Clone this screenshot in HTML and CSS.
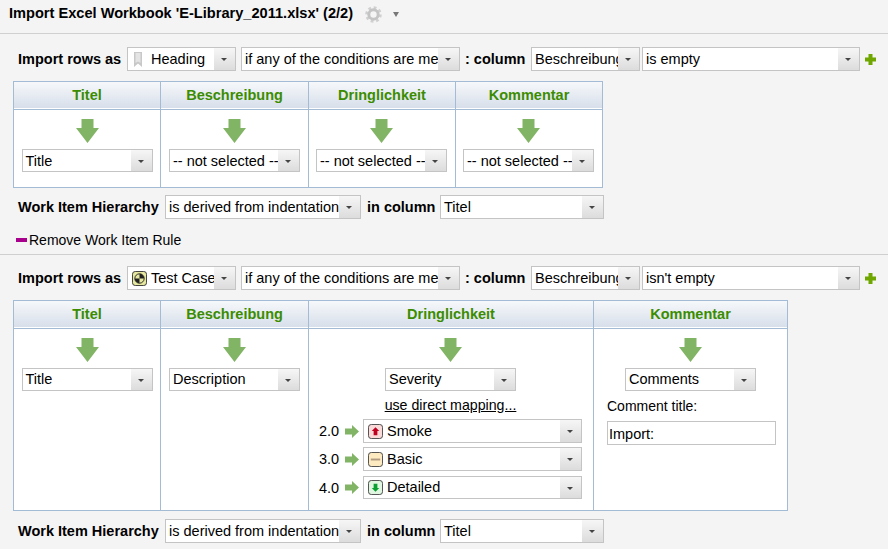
FILE: index.html

```html
<!DOCTYPE html>
<html lang="en">
<head>
   <meta charset="utf-8"/>
   <title>Import Excel Workbook</title>
   <link rel="stylesheet" href="styles.css">
</head>
<body>
<svg class="defs" width="0" height="0" aria-hidden="true">
   <symbol id="down" viewBox="0 0 23 24"><path d="M5.500 0h12v9H23L11.500 24 0 9h5.500z"/></symbol>
   <symbol id="right" viewBox="0 0 14 13"><path d="M0 3.500h7V0l7 6.500L7 13V9.500H0z"/></symbol>
</svg>

<!--title bar-->
<header class="title-bar">
   <h1>Import Excel Workbook 'E-Library_2011.xlsx' (2/2)</h1>
   <svg class="gear" viewBox="0 0 20 20">
      <circle cx="10" cy="10" r="8" fill="none" stroke="#d0d0d0" stroke-width="3.500" stroke-dasharray="3.200 3.080"/>
      <circle cx="10" cy="10" r="5.500" fill="none" stroke="#c4c4c4" stroke-width="3.500"/>
   </svg>
   <span class="menu-caret"></span>
</header>

<!--first rule-->
<section class="rule">
   <div class="import-row">
      <span class="label label-import">Import rows as</span>
      <div class="sel w-type">
         <span class="val val-icon">
            <svg class="ico-bookmark" viewBox="0 0 8 15"><path d="M0 0h8v15L4 11.500 0 15z" fill="#c8c8c8"/><path d="M1.500 1h5v10L4 9.500 1.500 11z" fill="#e4e4e4"/></svg>
            <span>Heading</span>
         </span>
         <span class="btn"></span>
      </div>
      <div class="sel w-cond"><span class="val">if any of the conditions are met</span><span class="btn"></span></div>
      <span class="label label-column">: column</span>
      <div class="sel w-col"><span class="val">Beschreibung</span><span class="btn"></span></div>
      <div class="sel w-test"><span class="val">is empty</span><span class="btn"></span></div>
      <svg class="plus" viewBox="0 0 11 11"><path d="M3.500 0h4v3.500H11v4H7.500V11h-4V7.500H0v-4h3.500z"/></svg>
   </div>

   <div class="map-table map-table-first">
      <div class="col c-a">
         <div class="col-head">Titel</div>
         <div class="col-body">
            <svg class="down"><use href="#down"/></svg>
            <div class="sel w-map"><span class="val">Title</span><span class="btn"></span></div>
         </div>
      </div>
      <div class="col c-b">
         <div class="col-head">Beschreibung</div>
         <div class="col-body">
            <svg class="down"><use href="#down"/></svg>
            <div class="sel w-map"><span class="val">-- not selected --</span><span class="btn"></span></div>
         </div>
      </div>
      <div class="col c-c">
         <div class="col-head">Dringlichkeit</div>
         <div class="col-body">
            <svg class="down"><use href="#down"/></svg>
            <div class="sel w-map"><span class="val">-- not selected --</span><span class="btn"></span></div>
         </div>
      </div>
      <div class="col c-c">
         <div class="col-head">Kommentar</div>
         <div class="col-body">
            <svg class="down"><use href="#down"/></svg>
            <div class="sel w-map"><span class="val">-- not selected --</span><span class="btn"></span></div>
         </div>
      </div>
   </div>

   <div class="hier-row">
      <span class="label label-hier">Work Item Hierarchy</span>
      <div class="sel w-hier"><span class="val">is derived from indentation</span><span class="btn"></span></div>
      <span class="label label-in">in column</span>
      <div class="sel w-title"><span class="val">Titel</span><span class="btn"></span></div>
   </div>

   <div class="remove"><span class="minus"></span>Remove Work Item Rule</div>
</section>

<!--second rule-->
<section class="rule rule-second">
   <div class="import-row">
      <span class="label label-import">Import rows as</span>
      <div class="sel w-type">
         <span class="val val-icon">
            <svg class="ico" viewBox="0 0 16 16">
               <rect x=".500" y=".500" width="15" height="15" rx="3" fill="#e6e8a0" stroke="#333"/>
               <circle cx="8" cy="8" r="5" fill="#e6e8a0" stroke="#222"/>
               <path d="M8 8V3a5 5 0 0 1 5 5zM8 8v5a5 5 0 0 1-5-5z" fill="#222"/>
            </svg>
            <span>Test Case</span>
         </span>
         <span class="btn"></span>
      </div>
      <div class="sel w-cond"><span class="val">if any of the conditions are met</span><span class="btn"></span></div>
      <span class="label label-column">: column</span>
      <div class="sel w-col"><span class="val">Beschreibung</span><span class="btn"></span></div>
      <div class="sel w-test"><span class="val">isn't empty</span><span class="btn"></span></div>
      <svg class="plus" viewBox="0 0 11 11"><path d="M3.500 0h4v3.500H11v4H7.500V11h-4V7.500H0v-4h3.500z"/></svg>
   </div>

   <div class="map-table">
      <div class="col c-a">
         <div class="col-head">Titel</div>
         <div class="col-body">
            <svg class="down"><use href="#down"/></svg>
            <div class="sel w-map"><span class="val">Title</span><span class="btn"></span></div>
         </div>
      </div>
      <div class="col c-b">
         <div class="col-head">Beschreibung</div>
         <div class="col-body">
            <svg class="down"><use href="#down"/></svg>
            <div class="sel w-map"><span class="val">Description</span><span class="btn"></span></div>
         </div>
      </div>
      <div class="col c-wide">
         <div class="col-head">Dringlichkeit</div>
         <div class="col-body">
            <svg class="down"><use href="#down"/></svg>
            <div class="sel w-map"><span class="val">Severity</span><span class="btn"></span></div>
            <a class="direct" href="#">use direct mapping...</a>
            <div class="value-map">
               <div class="value-row">
                  <span class="num">2.0</span>
                  <svg class="right"><use href="#right"/></svg>
                  <div class="sel w-value">
                     <span class="val val-icon">
                        <svg class="ico" viewBox="0 0 16 16">
                           <rect x=".500" y=".500" width="15" height="15" rx="3" fill="#fbdada" stroke="#444"/>
                           <path d="M8 3.500l4 4H10V12H6V7.500H4z" fill="#c00020"/>
                        </svg>
                        <span>Smoke</span>
                     </span>
                     <span class="btn"></span>
                  </div>
               </div>
               <div class="value-row">
                  <span class="num">3.0</span>
                  <svg class="right"><use href="#right"/></svg>
                  <div class="sel w-value">
                     <span class="val val-icon">
                        <svg class="ico" viewBox="0 0 16 16">
                           <rect x=".500" y=".500" width="15" height="15" rx="3" fill="#fdeac0" stroke="#444"/>
                           <rect x="3" y="7" width="10" height="2" fill="#b09a80"/>
                        </svg>
                        <span>Basic</span>
                     </span>
                     <span class="btn"></span>
                  </div>
               </div>
               <div class="value-row">
                  <span class="num">4.0</span>
                  <svg class="right"><use href="#right"/></svg>
                  <div class="sel w-value">
                     <span class="val val-icon">
                        <svg class="ico" viewBox="0 0 16 16">
                           <rect x=".500" y=".500" width="15" height="15" rx="3" fill="#e0f6e0" stroke="#444"/>
                           <path d="M6 4h4v4.500h2l-4 4-4-4h2z" fill="#08a030"/>
                        </svg>
                        <span>Detailed</span>
                     </span>
                     <span class="btn"></span>
                  </div>
               </div>
            </div>
         </div>
      </div>
      <div class="col c-last">
         <div class="col-head">Kommentar</div>
         <div class="col-body">
            <svg class="down"><use href="#down"/></svg>
            <div class="sel w-map"><span class="val">Comments</span><span class="btn"></span></div>
            <div class="comment-label">Comment title:</div>
            <div class="comment-input">Import:</div>
         </div>
      </div>
   </div>

   <div class="hier-row">
      <span class="label label-hier">Work Item Hierarchy</span>
      <div class="sel w-hier"><span class="val">is derived from indentation</span><span class="btn"></span></div>
      <span class="label label-in">in column</span>
      <div class="sel w-title"><span class="val">Titel</span><span class="btn"></span></div>
   </div>
</section>
</body>
</html>
```

FILE: styles.css

```css
/* page */
html, body {
   margin: 0;
   height: 549px;
   overflow: hidden;
}
body {
   background: #f4f4f4;
   color: #000;
   font-family: "Liberation Sans", Arial, sans-serif;
   font-size: 14.5px;
}
.defs {
   position: absolute;
}

/* title bar */
.title-bar {
   display: flex;
   align-items: center;
   box-sizing: border-box;
   height: 34px;
   padding: 0 0 7px 9px;
   border-bottom: 1px solid #d0d0d0;
}
.title-bar h1 {
   margin: 0;
   font-size: 14.6px;
   font-weight: bold;
}
.gear {
   width: 17px;
   height: 17px;
   margin-left: 12px;
   margin-top: 3px;
}
.menu-caret {
   width: 0;
   height: 0;
   margin-left: 11px;
   margin-top: 3px;
   border-left: 3px solid transparent;
   border-right: 3px solid transparent;
   border-top: 5px solid #777;
}

/* rule sections */
.rule {
   padding-top: 13px;
}
.rule-second {
   padding-top: 11px;
   border-top: 1px solid #cfcfcf;
}

.import-row,
.hier-row {
   display: flex;
   align-items: center;
   padding-left: 18px;
}
.label {
   font-weight: bold;
   font-size: 14.5px;
   white-space: nowrap;
}
.label-import { width: 109px; }
.label-column { width: 66px; margin-left: 5px; }
.label-hier { width: 147px; }
.label-in { width: 73px; margin-left: 6px; }

/* select boxes */
.sel {
   display: flex;
   box-sizing: border-box;
   height: 24px;
   background: #fff;
   border: 1px solid #c4c4c4;
   flex: none;
}
.val {
   flex: 1;
   min-width: 0;
   overflow: hidden;
   white-space: nowrap;
   padding-left: 3px;
   line-height: 22px;
}
.val-icon {
   display: flex;
   align-items: center;
   gap: 4px;
}
.btn {
   position: relative;
   flex: none;
   width: 21px;
   background: linear-gradient(#f6f6f6, #dcdcdc);
}
.btn::after {
   content: "";
   position: absolute;
   left: 7px;
   top: 10px;
   border-left: 3.500px solid transparent;
   border-right: 3.500px solid transparent;
   border-top: 3.500px solid #444;
}
.w-type { width: 109px; margin-right: 5px; }
.w-cond { width: 219px; }
.w-col { width: 109px; margin-right: 2px; }
.w-test { width: 218px; }
.w-map { width: 131px; height: 23px; }
.w-hier { width: 196px; }
.w-title { width: 164px; }
.w-value { width: 219px; }
.w-map .val { line-height: 21px; }
.map-table-first .w-map .val { line-height: 23px; }

.plus {
   width: 11px;
   height: 11px;
   margin-left: 5px;
   fill: #6fa600;
}
.ico {
   flex: none;
   width: 15px;
   height: 15px;
   margin-left: 1px;
}
.ico-bookmark {
   flex: none;
   width: 8px;
   height: 15px;
   margin-left: 3px;
   margin-right: 5px;
}

/* mapping table */
.map-table {
   display: flex;
   width: max-content;
   margin: 10px 0 0 13px;
   background: #fff;
   border: 1px solid #a3bbd5;
}
.col {
   box-sizing: border-box;
   border-left: 1px solid #a3bbd5;
}
.c-a { width: 146px; border-left: 0; }
.c-b { width: 148px; }
.c-c { width: 147px; }
.c-wide { width: 285px; }
.c-last { width: 194px; }
.col-head {
   height: 27px;
   line-height: 26px;
   border-bottom: 1px solid #a3bbd5;
   box-shadow: inset 0 -1px 0 #fff;
   background: linear-gradient(#f6f8fa, #d6deea);
   color: #3c8c00;
   font-weight: bold;
   text-align: center;
}
.col-body {
   display: flex;
   flex-direction: column;
   align-items: center;
   padding: 9px 0 15px;
}
.c-c .col-body,
.c-wide .col-body {
   padding-right: 1px;
}
.c-wide .col-body {
   padding-bottom: 11px;
}
.down {
   display: block;
   width: 23px;
   height: 24px;
   margin-bottom: 6px;
   fill: #82b466;
}

/* second table extras */
.direct {
   margin-top: 6px;
   color: #000;
   font-size: 14.2px;
   line-height: 16px;
}
.value-map {
   display: flex;
   flex-direction: column;
   gap: 4px;
   margin-top: 6px;
}
.value-row {
   display: flex;
   align-items: center;
}
.value-row:last-child {
   margin-top: 1px;
}
.value-row:last-child .sel {
   height: 23px;
}
.value-row:last-child .val {
   padding-bottom: 1px;
}
.num {
   width: 26px;
}
.right {
   width: 14px;
   height: 13px;
   margin-right: 4px;
   fill: #82b466;
}
.comment-label {
   align-self: flex-start;
   margin: 7px 0 0 13px;
   font-size: 14px;
   line-height: 17px;
}
.comment-input {
   box-sizing: border-box;
   width: 169px;
   height: 24px;
   margin-top: 6px;
   margin-left: 2px;
   padding-left: 1px;
   line-height: 24px;
   border: 1px solid #c4c4c4;
}

/* hierarchy row */
.hier-row {
   margin-top: 7px;
}
.rule-second .hier-row {
   margin-top: 8px;
}
.remove {
   display: flex;
   align-items: center;
   height: 16px;
   margin: 13px 0 6px 16px;
   font-size: 14px;
}
.minus {
   width: 11px;
   height: 4px;
   margin-right: 2px;
   background: #a8008c;
}
```
